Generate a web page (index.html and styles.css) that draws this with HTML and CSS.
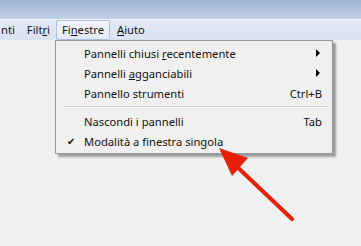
FILE: index.html
```html
<!DOCTYPE html>
<html lang="it">

<head>
    <meta charset="UTF-8">
    <title>Finestre</title>
    <link rel="stylesheet" href="styles.css">
</head>

<body>
    <div class="titlebar"></div>
    <div class="menubar">
        <span class="menu-item cut">nti</span>
        <span class="menu-item">Filt<u>r</u>i</span>
        <span class="menu-item open">Fi<u>n</u>estre</span>
        <span class="menu-item"><u>A</u>iuto</span>
    </div>

    <div class="dropdown">
        <div class="row">
            <span class="label">Pannelli chiusi <u>r</u>ecentemente</span>
            <span class="arrow"></span>
        </div>
        <div class="row">
            <span class="label">Pannelli <u>a</u>gganciabili</span>
            <span class="arrow"></span>
        </div>
        <div class="row">
            <span class="label">Pannello strumenti</span>
            <span class="shortcut">Ctrl+B</span>
        </div>
        <div class="separator"></div>
        <div class="row">
            <span class="label">Nascondi i pannelli</span>
            <span class="shortcut">Tab</span>
        </div>
        <div class="row">
            <span class="check">&#10004;</span>
            <span class="label">Modalità a finestra singola</span>
        </div>
    </div>

    <svg class="pointer" width="361" height="246" viewBox="0 0 361 246">
        <line x1="292" y1="219" x2="232" y2="162" stroke="#e8200a" stroke-width="4" stroke-linecap="round" />
        <polygon points="219,148 248,158 232,176" fill="#e8200a" />
    </svg>
</body>

</html>
```

FILE: styles.css
```css
body {
    margin: 0;
    background-color: #f0f0f0;
    font-family: "Noto Sans", sans-serif;
    font-size: 11.2px;
    color: #111;
    height: 246px;
    overflow: hidden;
}

.titlebar {
    height: 19px;
    background: linear-gradient(#9db3d4, #c3d2e7);
}

.menubar {
    display: flex;
    align-items: center;
    height: 19px;
    padding-bottom: 1px;
    border-top: 1px solid #f4f7fb;
    background: linear-gradient(#e2e9f5, #d9e2f1);
}

.menu-item {
    padding: 0 5px;
    line-height: 18px;
    border: 1px solid transparent;
    border-radius: 2px;
}

.menu-item.cut {
    padding-left: 0;
    padding-right: 5px;
}

.menu-item.open {
    margin: 0 1px 0 0;
    border-color: #a9c2e2;
    background: linear-gradient(#f3f6fb, #e3eaf5);
}

.dropdown {
    position: absolute;
    top: 40px;
    left: 55px;
    width: 276px;
    padding: 2px 0;
    background-color: #f0f0f0;
    border: 1px solid #979797;
    box-shadow: 3px 3px 2px rgba(0, 0, 0, 0.35);
}

.row {
    display: flex;
    align-items: center;
    height: 20px;
    padding: 0 10px 0 28px;
    position: relative;
}

.label {
    flex: 1;
}

.shortcut {
    text-align: right;
}

.arrow {
    width: 0;
    height: 0;
    border-top: 4px solid transparent;
    border-bottom: 4px solid transparent;
    border-left: 4px solid #000;
    margin-right: 2px;
}

.check {
    position: absolute;
    left: 11px;
    font-size: 10px;
}

.separator {
    height: 1px;
    margin: 3px 2px 3px 6px;
    background-color: #d7d7d7;
    border-bottom: 1px solid #fff;
}

.pointer {
    position: absolute;
    top: 0;
    left: 0;
}
```
